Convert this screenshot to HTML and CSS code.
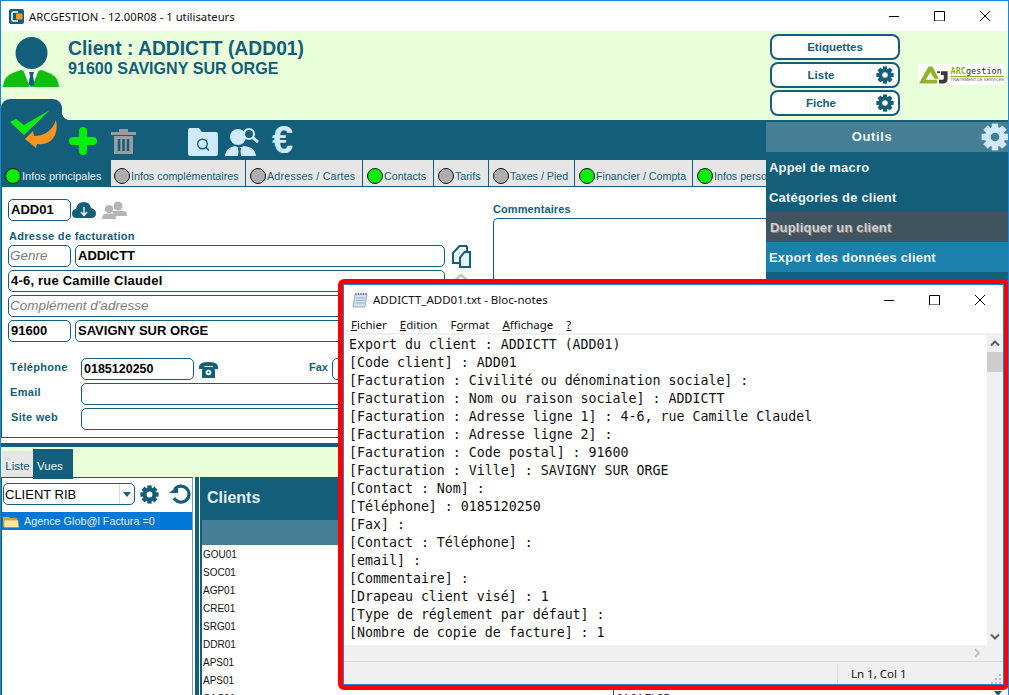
FILE: index.html
```html
<!DOCTYPE html>
<html lang="fr">
<head>
<meta charset="utf-8">
<title>ARCGESTION</title>
<link rel="stylesheet" href="styles.css">
</head>
<body>
<svg class="defs" width="0" height="0" aria-hidden="true">
  <symbol id="gear" viewBox="0 0 24 24">
    <g fill="currentColor">
      <rect x="9.2" y="0.5" width="5.6" height="6"/>
      <rect x="9.2" y="0.5" width="5.6" height="6" transform="rotate(45 12 12)"/>
      <rect x="9.2" y="0.5" width="5.6" height="6" transform="rotate(90 12 12)"/>
      <rect x="9.2" y="0.5" width="5.6" height="6" transform="rotate(135 12 12)"/>
      <rect x="9.2" y="0.5" width="5.6" height="6" transform="rotate(180 12 12)"/>
      <rect x="9.2" y="0.5" width="5.6" height="6" transform="rotate(225 12 12)"/>
      <rect x="9.2" y="0.5" width="5.6" height="6" transform="rotate(270 12 12)"/>
      <rect x="9.2" y="0.5" width="5.6" height="6" transform="rotate(315 12 12)"/>
    </g>
    <circle cx="12" cy="12" r="6.2" fill="none" stroke="currentColor" stroke-width="5"/>
  </symbol>
  <symbol id="winctl" viewBox="0 0 101 10">
    <path d="M0 5.5H10M45.5 .5H55.5V10H45.5ZM91 0L101 10M101 0L91 10" fill="none" stroke="#000" stroke-width="1"/>
  </symbol>
</svg>

<div class="app">
  <div class="titlebar">
    <svg class="appicon" width="15" height="15" viewBox="0 0 15 15"><rect width="15" height="15" rx="2" fill="#135e7a"/><path d="M9 3H4.500Q3 3 3 4.500V10.500Q3 12 4.500 12H9" fill="none" stroke="#fff" stroke-width="1.600"/><rect x="7" y="4.500" width="6.500" height="6" rx="1" fill="#f39a1f"/></svg>
    <span class="apptitle">ARCGESTION - 12.00R08 - 1 utilisateurs</span>
    <svg class="winctl" width="101" height="10"><use href="#winctl"/></svg>
  </div>

  <header class="header">
    <div class="headleft">
      <svg class="avatar" width="56" height="50" viewBox="0 0 56 50">
        <circle cx="28.500" cy="16" r="16" fill="#135e7a"/>
        <path d="M0 50C1 40 5 37 18 33L28 36L38 33C51 37 55 40 56 50Z" fill="#0fbf0f"/>
        <path d="M20 32.500L28 36L36 32.500L29 50H27Z" fill="#fff"/>
        <path d="M26 35H31L30 39L31.500 47L28.500 50L25.500 47L27 39Z" fill="#135e7a"/>
      </svg>
      <div class="nub">
        <svg class="checkmark" width="48" height="40" viewBox="0 0 48 40">
          <path d="M0 12L6 9L14 15L40 0L14 25Z" fill="#10ea10"/>
          <path d="M46 10C49 24 42 36 27 34L26 38L15 29L23 21L24 26C33 26 42 22 46 10Z" fill="#f5941f"/>
        </svg>
      </div>
    </div>
    <div class="clientinfo">
      <h1 class="clientname">Client : ADDICTT (ADD01)</h1>
      <div class="clientcity">91600 SAVIGNY SUR ORGE</div>
    </div>
    <div class="headbtns">
      <div class="hbtn"><span class="hbtn-label">Etiquettes</span></div>
      <div class="hbtn"><span class="hbtn-label">Liste</span><span class="hbtn-gear"><svg width="18" height="18"><use href="#gear"/></svg></span></div>
      <div class="hbtn"><span class="hbtn-label">Fiche</span><span class="hbtn-gear"><svg width="18" height="18"><use href="#gear"/></svg></span></div>
    </div>
    <div class="logo">
      <svg width="32" height="20" viewBox="0 0 32 20"><path d="M1 19L11 1H15L22 14H17L13 7L8 15H20V19Z" fill="#8db526"/><path d="M20 6H23V8H20ZM24 6H31V14Q31 19 26 19H22V15H26Q27 15 27 13V10H24Z" fill="#3a3a3a"/></svg>
      <div class="logotext"><span class="logoname"><b>ARC</b>gestion</span><span class="logosub">TRAITEMENT DE SERVICES</span></div>
    </div>
  </header>

  <div class="toolbar">
    <svg class="tool plus" width="28" height="28" viewBox="0 0 28 28"><path d="M14 4V24M4 14H24" stroke="#00f000" stroke-width="8" stroke-linecap="round"/></svg>
    <svg class="tool trash" width="25" height="28" viewBox="0 0 25 28"><path d="M0 6H25V9H0ZM8 3H17V6H8ZM3 10H22V28H3Z" fill="#9c9c9c"/><path d="M8 13V25M12.500 13V25M17 13V25" stroke="#135e7a" stroke-width="2.500"/></svg>
    <svg class="tool folder" width="30" height="28" viewBox="0 0 30 28"><path d="M0 2Q0 0 2 0H11L14 4H28Q30 4 30 6V26Q30 28 28 28H2Q0 28 0 26Z" fill="#cfeafc"/><circle cx="14.500" cy="16" r="4.800" fill="none" stroke="#135e7a" stroke-width="1.400"/><path d="M18 19.500L21 22.500" stroke="#135e7a" stroke-width="1.600"/></svg>
    <svg class="tool usersearch" width="35" height="29" viewBox="0 0 35 29"><circle cx="13" cy="10" r="8" fill="#cfeafc"/><path d="M0 29C1 22 5 20 10 19L14 21L19 19C26 20 30 22 31 29Z" fill="#cfeafc"/><path d="M13 21L16 21L15.500 24L16 29H13L13.500 24Z" fill="#135e7a"/><circle cx="24" cy="7" r="5" fill="#135e7a" stroke="#cfeafc" stroke-width="2.200"/><path d="M27.500 10.500L33 15" stroke="#cfeafc" stroke-width="3"/></svg>
    <span class="euro">€</span>
  </div>

  <nav class="tabs">
    <div class="tab active"><i class="dot on"></i>Infos principales</div>
    <div class="tab t-compl"><i class="dot"></i>Infos complémentaires</div>
    <div class="tab t-addr"><i class="dot"></i>Adresses / Cartes</div>
    <div class="tab t-cont"><i class="dot on"></i>Contacts</div>
    <div class="tab t-tar"><i class="dot"></i>Tarifs</div>
    <div class="tab t-tax"><i class="dot"></i>Taxes / Pied</div>
    <div class="tab t-fin"><i class="dot on"></i>Financier / Compta</div>
    <div class="tab last"><i class="dot on"></i>Infos perso</div>
  </nav>

  <section class="panel">
    <div class="formcol">
      <div class="row coderow">
        <div class="field w63"><b>ADD01</b></div>
        <svg class="cloud" width="24" height="18" viewBox="0 0 24 18"><path d="M5 17Q0 17 0 12.500Q0 8.500 4 8Q5 1 12 1Q18 1 19 7Q24 8 24 12.500Q24 17 19 17Z" fill="#135e7a"/><path d="M12 6V14M9 11L12 14.500L15 11" fill="none" stroke="#fff" stroke-width="1.300"/></svg>
        <svg class="people" width="25" height="18" viewBox="0 0 25 18"><circle cx="16" cy="5" r="4.500" fill="#b5b5b5"/><path d="M10 10H23Q25 11 25 15H12Z" fill="#b5b5b5"/><circle cx="7" cy="8" r="4" fill="#b5b5b5"/><path d="M0 18Q0 13 4 12.500H10Q14 13 14 18Z" fill="#b5b5b5"/></svg>
      </div>
      <div class="seclabel">Adresse de facturation</div>
      <div class="row addr">
        <div class="field w63 hint">Genre</div>
        <div class="field grow"><b>ADDICTT</b></div>
      </div>
      <div class="row addr"><div class="field grow spaced"><b>4-6, rue Camille Claudel</b></div></div>
      <div class="row addr"><div class="field grow hint">Complément d'adresse</div></div>
      <div class="row addr">
        <div class="field w63"><b>91600</b></div>
        <div class="field grow"><b>SAVIGNY SUR ORGE</b></div>
      </div>
      <div class="row contact tel">
        <label class="clabel">Téléphone</label>
        <div class="field w113"><b>0185120250</b></div>
        <svg class="phone" width="19" height="17" viewBox="0 0 19 17"><path d="M0 6Q0 1 9.500 1Q19 1 19 6V8H14V5H5V8H0Z" fill="#135e7a"/><path d="M3 9L5 6H14L16 9V17H3Z" fill="#135e7a"/><circle cx="9.500" cy="11.500" r="2.800" fill="#fff"/><circle cx="9.500" cy="11.500" r="1" fill="#135e7a"/></svg>
        <label class="faxlabel">Fax</label>
        <div class="field grow"></div>
      </div>
      <div class="row contact"><label class="clabel">Email</label><div class="field grow"></div></div>
      <div class="row contact"><label class="clabel site">Site web</label><div class="field grow"></div></div>
    </div>
    <div class="iconcol">
      <svg width="19" height="23" viewBox="0 0 19 23"><path d="M15 1H7.500L1 8V18H7M15 1V7" fill="none" stroke="#135e7a" stroke-width="2"/><path d="M7 8H7.500M8 12.500L12.500 7H18V22H8Z" fill="#e4f2f9" stroke="#135e7a" stroke-width="2"/></svg>
      <svg class="chevron" width="16" height="8" viewBox="0 0 16 8"><path d="M1 8L8 2L15 8" fill="none" stroke="#c8c8c8" stroke-width="2.500"/></svg>
    </div>
    <div class="commentcol">
      <div class="commentlabel">Commentaires</div>
      <div class="commentbox"></div>
    </div>
  </section>

  <div class="splitbar"></div>
  <div class="subtabs">
    <div class="subtab">Liste</div>
    <div class="subtab current">Vues</div>
  </div>

  <section class="lower">
    <aside class="views">
      <div class="viewtools">
        <div class="select"><span class="selval">CLIENT RIB</span><span class="selarrow"></span></div>
        <svg class="vgear" width="19" height="19"><use href="#gear"/></svg>
        <svg class="refresh" width="22" height="20" viewBox="0 0 22 20"><path d="M5.500 5.500A8 8 0 1 1 5 14" fill="none" stroke="#135e7a" stroke-width="3.200"/><path d="M0 9H9V2Z" fill="#135e7a"/></svg>
      </div>
      <div class="treeitem">
        <svg width="16" height="13" viewBox="0 0 16 13"><path d="M0 2H6L7 3H14V12H0Z" fill="#d9a93a"/><path d="M1 5H15L16 12.500H1Z" fill="#fbe79a" stroke="#b88a2c" stroke-width=".6"/></svg>
        <span>Agence Glob@l Factura =0</span>
      </div>
    </aside>
    <div class="vsplit"></div>
    <div class="clients">
      <div class="clienthead">Clients</div>
      <div class="tablewrap">
        <div class="colhead"></div>
        <div class="trow"><span>GOU01</span></div>
        <div class="trow"><span>SOC01</span></div>
        <div class="trow"><span>AGP01</span></div>
        <div class="trow"><span>CRE01</span></div>
        <div class="trow"><span>SRG01</span></div>
        <div class="trow"><span>DDR01</span></div>
        <div class="trow"><span>APS01</span></div>
        <div class="trow"><span>APS01</span></div>
        <div class="trow tail"><span>CAC01</span></div>
      </div>
    </div>
  </section>

  <aside class="tools">
    <div class="toolshead">Outils<svg class="toolsgear" width="28" height="28"><use href="#gear"/></svg></div>
    <div class="toolitem">Appel de macro</div>
    <div class="toolitem">Catégories de client</div>
    <div class="toolitem disabled">Dupliquer un client</div>
    <div class="toolitem hover">Export des données client</div>
  </aside>

  <div class="belowcell"><span class="belowtext">94 94 ELSB</span><i class="belowarrow"></i></div>

  <div class="notepad">
    <div class="np-inner">
      <div class="np-title">
        <svg class="np-icon" width="16" height="16" viewBox="0 0 16 16"><path d="M3 2H15L13 15H1Z" fill="#cfe3f2" stroke="#7e9db5" stroke-width=".8"/><path d="M4 1V3M6.500 1V3M9 1V3M11.500 1V3M14 1V3" stroke="#555" stroke-width=".8"/><path d="M4 6H13M3.700 8.500H12.700M3.400 11H12.300" stroke="#8aa9c0" stroke-width=".8"/></svg>
        <span class="np-name">ADDICTT_ADD01.txt - Bloc-notes</span>
        <svg class="np-ctl" width="101" height="10"><use href="#winctl"/></svg>
      </div>
      <div class="np-menu">
        <span><u>F</u>ichier</span><span><u>E</u>dition</span><span>F<u>o</u>rmat</span><span><u>A</u>ffichage</span><span><u>?</u></span>
      </div>
      <div class="np-body">
<pre class="np-text">Export du client : ADDICTT (ADD01)
[Code client] : ADD01
[Facturation : Civilité ou dénomination sociale] :
[Facturation : Nom ou raison sociale] : ADDICTT
[Facturation : Adresse ligne 1] : 4-6, rue Camille Claudel
[Facturation : Adresse ligne 2] :
[Facturation : Code postal] : 91600
[Facturation : Ville] : SAVIGNY SUR ORGE
[Contact : Nom] :
[Téléphone] : 0185120250
[Fax] :
[Contact : Téléphone] :
[email] :
[Commentaire] :
[Drapeau client visé] : 1
[Type de réglement par défaut] :
[Nombre de copie de facture] : 1</pre>
        <div class="np-vscroll">
          <svg class="sbtn" width="16" height="17" viewBox="0 0 16 17"><path d="M4 10.500L8 6.500L12 10.500" fill="none" stroke="#606060" stroke-width="2"/></svg>
          <div class="thumb"></div>
          <svg class="sbtn bottom" width="16" height="17" viewBox="0 0 16 17"><path d="M4 6.500L8 10.500L12 6.500" fill="none" stroke="#606060" stroke-width="2"/></svg>
        </div>
      </div>
      <div class="np-hscroll">
        <svg width="10" height="10" viewBox="0 0 10 10"><path d="M3 1L7 5L3 9" fill="none" stroke="#c4c4c4" stroke-width="2"/></svg>
      </div>
      <div class="np-status">
        <span class="np-pos">Ln 1, Col 1</span>
        <svg class="grip" width="12" height="12" viewBox="0 0 12 12"><path d="M9 2h2v2H9zM5 6h2v2H5zM9 6h2v2H9zM1 10h2v2H1zM5 10h2v2H5zM9 10h2v2H9z" fill="#bdbdbd"/></svg>
      </div>
    </div>
  </div>
</div>
</body>
</html>
```
FILE: styles.css
```css
* { box-sizing: border-box; }
html, body { margin: 0; padding: 0; height: 100%; overflow: hidden; background: #fff; }
body { font-family: "Liberation Sans", Arial, sans-serif; color: #000; }
.defs { position: absolute; }

.app {
  position: relative;
  width: 1009px;
  height: 695px;
  overflow: hidden;
  border: 1px solid #1a86d8;
  border-bottom: 0;
  display: flex;
  flex-direction: column;
}

/* title bar */
.titlebar { height: 30px; flex: none; display: flex; align-items: center; padding-left: 8px; background: #fff; }
.appicon { margin-right: 5px; }
.apptitle { font: 11.300px "Noto Sans", sans-serif; color: #111; }
.winctl { margin-left: auto; margin-right: 18px; }

/* header */
.header { height: 89px; flex: none; background: #e9ffd9; display: flex; position: relative; }
.headleft { width: 61px; flex: none; display: flex; flex-direction: column; }
.avatar { margin: 6px 0 0 2px; flex: none; }
.nub {
  margin-top: auto;
  height: 21px;
  width: 61px;
  background: #135e7a;
  border-radius: 9px 9px 0 0;
  position: relative;
}
.nub::after {
  content: "";
  position: absolute;
  left: 61px;
  bottom: 0;
  width: 8px;
  height: 8px;
  background: radial-gradient(circle at 100% 0, transparent 8px, #135e7a 8px);
}
.checkmark { position: absolute; left: 9px; top: 11px; overflow: visible; z-index: 1; }
.clientinfo { margin: 8px 0 0 6px; flex: 1; color: #135e7a; }
.clientname { margin: 0; font-size: 19.300px; line-height: 20px; font-weight: bold; }
.clientcity { font-size: 16.100px; line-height: 19px; font-weight: bold; }
.headbtns { width: 130px; flex: none; margin-top: 3px; display: flex; flex-direction: column; gap: 2px; }
.hbtn {
  height: 26px;
  background: #fff;
  border: 2px solid #135e7a;
  border-radius: 8px;
  display: flex;
  align-items: center;
  color: #135e7a;
  font-size: 11.500px;
  font-weight: bold;
}
.hbtn-label { flex: 1; text-align: center; }
.hbtn-gear { width: 28px; height: 22px; display: flex; align-items: center; justify-content: center; border-left: 1px solid #eef5f8; color: #135e7a; }
.logo { width: 86px; height: 21px; background: #fff; margin: 33px 4px 0 18px; flex: none; display: flex; align-items: center; }
.logotext { display: flex; flex-direction: column; margin-left: 2px; }
.logoname { font: 8.500px "DejaVu Sans Mono", monospace; line-height: 10px; color: #2c2c2c; border-bottom: 1px solid #8db526; white-space: nowrap; }
.logoname b { color: #8db526; font-weight: bold; }
.logosub { font-size: 4px; line-height: 6px; color: #555; white-space: nowrap; }

/* toolbar */
.toolbar { height: 40px; flex: none; background: #135e7a; display: flex; align-items: flex-start; padding: 7px 0 0 68px; }
.trash { margin-left: 14px; margin-top: -1px; }
.folder { margin-left: 52px; margin-top: 1px; }
.usersearch { margin-left: 7px; }
.euro { margin-left: 12px; margin-top: -6px; font-size: 38px; line-height: 38px; font-weight: bold; color: #cfeafc; }

/* tabs */
.tabs { height: 27px; flex: none; display: flex; background: #e6e6e6; border-bottom: 1px solid #135e7a; margin-right: 242px; overflow: hidden; }
.tab {
  display: flex;
  align-items: center;
  height: 26px;
  padding: 5px 0 0 4px;
  border-right: 1px solid #135e7a;
  font-size: 10.700px;
  color: #135e7a;
  white-space: nowrap;
  flex: none;
}
.tab.active { background: #135e7a; color: #e9f6fb; width: 110px; height: 27px; border-right: 0; font-size: 11px; }
.t-compl { width: 135px; padding-left: 3px; }
.t-addr { width: 117px; letter-spacing: .2px; }
.t-cont { width: 71px; }
.t-tar { width: 55px; }
.t-tax { width: 86px; }
.t-fin { width: 118px; }
.tab.last { border-right: 0; }
.dot { width: 16px; height: 16px; border-radius: 50%; border: 1px solid #111; background: #aeaeae; margin-right: 1px; flex: none; }
.dot.on { background: #00f000; }

/* form panel */
.panel { height: 251px; flex: none; display: flex; border-left: 1px solid #135e7a; border-bottom: 1px solid #135e7a; padding: 12px 0 0 6px; }
.formcol { width: 437px; flex: none; }
.row { display: flex; }
.coderow { height: 22px; align-items: center; }
.seclabel { font-size: 11px; font-weight: bold; color: #135e7a; line-height: 12px; margin: 9px 0 3px 1px; letter-spacing: .3px; }
.addr { margin-bottom: 3px; gap: 4px; }
.field {
  height: 22px;
  border: 1px solid #135e7a;
  border-radius: 5px;
  background: #fff;
  font-size: 13px;
  line-height: 20px;
  padding-left: 2px;
  white-space: nowrap;
  overflow: hidden;
}
.spaced { letter-spacing: .2px; }
.w63 { width: 63px; flex: none; }
.w113 { width: 113px; flex: none; }
.grow { flex: 1; min-width: 0; }
.hint { color: #7d7d7d; font-style: italic; font-weight: normal; font-size: 13.500px; padding-left: 1px; }
.cloud { margin-left: 1px; }
.people { margin-left: 6px; }
.contact { margin-bottom: 3px; align-items: center; }
.tel { margin-top: 16px; }
.clabel { width: 73px; flex: none; padding: 0 0 4px 2px; font-size: 11px; font-weight: bold; color: #135e7a; letter-spacing: .3px; }
.clabel.site { padding-left: 3px; }
.tel .field b { font-size: 12.500px; }
.phone { margin-left: 5px; }
.faxlabel { margin-left: 91px; width: 23px; flex: none; padding-bottom: 4px; font-size: 11px; font-weight: bold; color: #135e7a; }
.iconcol { width: 48px; flex: none; display: flex; flex-direction: column; padding: 46px 0 0 7px; }
.chevron { margin: 5px 0 0 1px; }
.commentcol { flex: 1; }
.commentlabel { font-size: 11px; font-weight: bold; color: #135e7a; line-height: 13px; margin-top: 4px; letter-spacing: .1px; }
.commentbox { height: 100px; margin-top: 2px; border: 1px solid #135e7a; border-right: 0; border-radius: 5px 0 0 0; }

/* lower */
.splitbar { height: 9px; flex: none; border-top: 5px solid #fff; background: #135e7a; }
.subtabs { height: 30px; flex: none; background: #e9ffd9; display: flex; align-items: flex-end; padding-left: 1px; }
.subtab { width: 31px; height: 26px; background: #e6e6e6; color: #135e7a; font-size: 11.500px; line-height: 30px; text-align: center; }
.subtab.current { width: 40px; height: 30px; background: #135e7a; color: #e9f6fb; margin-bottom: -2px; position: relative; line-height: 34px; text-align: left; padding-left: 4px; }
.lower { flex: 1; min-height: 0; display: flex; border-left: 1px solid #135e7a; }
.views { width: 191px; flex: none; border-right: 1px solid #7e9fb0; border-top: 1px solid #135e7a; }
.viewtools { height: 34px; display: flex; align-items: flex-start; padding: 5px 0 0 1px; }
.select { width: 132px; height: 22px; border: 1px solid #135e7a; border-radius: 5px; display: flex; align-items: center; padding-left: 1px; }
.selval { flex: 1; font-size: 13px; color: #000; }
.selarrow { width: 15px; height: 20px; border-left: 1px solid #cfe0e8; position: relative; }
.selarrow::after { content: ""; position: absolute; left: 3px; top: 8px; border: 4px solid transparent; border-top: 5px solid #135e7a; border-bottom: 0; }
.vgear { margin: 2px 0 0 5px; color: #135e7a; }
.refresh { margin: 1px 0 0 10px; }
.treeitem { height: 18px; display: flex; align-items: center; background: #0078d7; color: #e6f1fa; font-size: 10.800px; gap: 5px; padding-left: 1px; }
.vsplit { width: 7px; flex: none; background: linear-gradient(90deg, #fff 2px, #135e7a 2px, #135e7a 6px, #fff 6px); }
.clients { flex: 1; min-width: 0; }
.clienthead { height: 43px; background: #135e7a; color: #e3f2f8; font-size: 16px; font-weight: bold; line-height: 42px; padding-left: 7px; }
.tablewrap { padding-left: 2px; background: linear-gradient(90deg, #135e7a 2px, #fff 2px); }
.colhead { height: 25px; background: #457e95; }
.trow { height: 18px; font-size: 10px; line-height: 19px; color: #111; padding-left: 1px; }

/* tools overlay */
.tools { position: absolute; left: 765px; top: 121px; width: 242px; height: 159px; background: #135e7a; color: #eef7fb; }
.toolshead { height: 30px; background: #457e95; font-size: 13px; font-weight: bold; line-height: 29px; text-align: center; padding-right: 30px; letter-spacing: .6px; position: relative; }
.toolsgear { position: absolute; right: -1px; top: 1px; color: #cfeafc; }
.toolitem { height: 30px; line-height: 31px; padding-left: 3px; font-size: 13px; font-weight: bold; letter-spacing: .2px; white-space: nowrap; }
.toolitem.disabled { background: #3f545e; color: #cfcfcf; padding-left: 4px; text-shadow: 1px 1px 0 #8a7a7a; }
.toolitem.hover { background: #1b80ab; }

/* below notepad */
.belowcell { position: absolute; left: 612px; top: 689px; width: 396px; height: 10px; border-left: 1px solid #135e7a; font-size: 10px; line-height: 10px; padding: 4px 0 0 3px; background: #fff; }
.belowarrow { position: absolute; right: 7px; top: 1px; border: 4px solid transparent; border-top: 5px solid #135e7a; border-bottom: 0; }

/* notepad window */
.notepad { position: absolute; left: 337px; top: 278px; width: 671px; height: 411px; border: 5px solid #f00; border-radius: 6px; background: #fff; }
.np-inner { height: 100%; border: 1px solid #1a86d8; display: flex; flex-direction: column; background: #fff; }
.np-title { height: 29px; flex: none; display: flex; align-items: center; padding-left: 8px; font: 11.500px "Noto Sans", sans-serif; color: #111; }
.np-icon { margin-right: 5px; }
.np-ctl { margin-left: auto; margin-right: 18px; }
.np-menu { height: 19px; flex: none; display: flex; gap: 13px; align-items: center; padding: 2px 0 0 7px; font: 11.500px "Noto Sans", sans-serif; color: #111; }
.np-body { flex: 1; min-height: 0; display: flex; border-top: 2px solid #f0f0f0; }
.np-text { flex: 1; margin: 0; padding: 1px 0 0 5px; font: 13.270px/18px "DejaVu Sans Mono", monospace; color: #111; overflow: hidden; }
.np-vscroll { width: 16px; flex: none; background: #f0f0f0; display: flex; flex-direction: column; }
.sbtn { flex: none; background: #f0f0f0; }
.sbtn.bottom { margin-top: auto; }
.thumb { height: 20px; background: #cdcdcd; flex: none; }
.np-hscroll { height: 16px; flex: none; background: #f0f0f0; display: flex; align-items: center; justify-content: flex-end; padding-right: 21px; }
.np-status { height: 23px; flex: none; background: #f0f0f0; border-top: 1px solid #d9d9d9; position: relative; font: 11.500px "Noto Sans", sans-serif; color: #111; padding-left: 493px; display: flex; align-items: center; }
.np-pos { border-left: 1px solid #d9d9d9; height: 19px; line-height: 19px; padding-left: 13px; }
.grip { position: absolute; right: 1px; bottom: 0; }
```
